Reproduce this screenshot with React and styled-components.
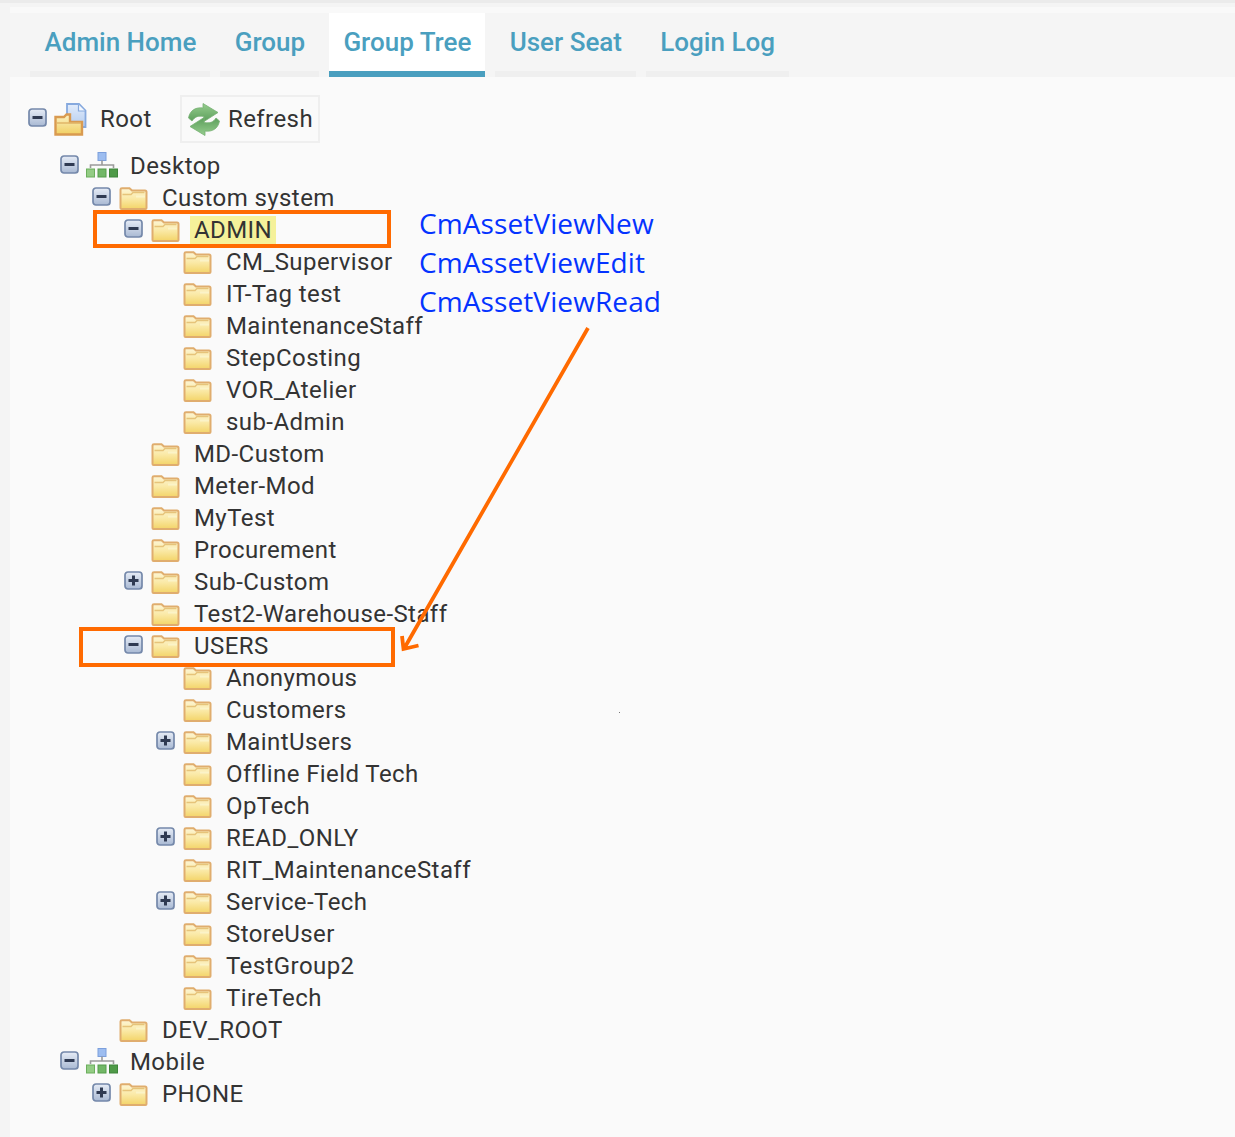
import React, { useId } from "react";
import styled, { createGlobalStyle } from "styled-components";

const Global = createGlobalStyle`
  html, body { margin: 0; padding: 0; background: #f4f4f4; }
  * { box-sizing: border-box; }
`;

const Page = styled.div`
  position: relative;
  width: 1235px;
  height: 1137px;
  overflow: hidden;
  display: flex;
  flex-direction: column;
  background: #f4f4f4;
  font-family: Roboto, "Liberation Sans", sans-serif;
`;
const TopStrip = styled.div`
  height: 3px;
  background: #ebebeb;
  flex: none;
`;
const Main = styled.div`
  flex: 1;
  margin-left: 10px;
  margin-top: 4px;
  display: flex;
  flex-direction: column;
  min-height: 0;
`;
const TabBar = styled.nav`
  display: flex;
  gap: 10px;
  height: 70px;
  padding: 6px 0 0 20px;
  background: linear-gradient(#f9f9f9 0, #f9f9f9 6px, #f5f5f5 6px);
  flex: none;
`;
const Tab = styled.div`
  padding: 0 13.8px 0 14.5px;
  height: 64px;
  line-height: 59px;
  font-size: 26px;
  font-weight: 500;
  color: #4a9fbf;
  background: ${(p) => (p.$active ? "#ffffff" : "transparent")};
  border-bottom: 6px solid ${(p) => (p.$active ? "#4a9fbf" : "#efefef")};
  white-space: nowrap;
`;
const Panel = styled.div`
  flex: 1;
  background: #fafafa;
  padding: 18px 0 0 18px;
  color: #333;
  font-size: 24px;
`;
const RootRow = styled.div`
  display: flex;
  align-items: center;
  height: 48px;
  margin-bottom: 7px;
`;
const RootLabel = styled.span`
  margin-left: 13px;
  width: 80px;
  letter-spacing: 0.42px;
  line-height: 1;
`;
const RefreshButton = styled.div`
  display: flex;
  align-items: center;
  gap: 7px;
  width: 140px;
  height: 48px;
  padding-left: 6px;
  border: 2px solid #efefef;
  background: #fafafa;
  letter-spacing: 0.42px;
  color: #333;
`;
const Row = styled.div`
  display: flex;
  align-items: center;
  height: 32px;
  padding-left: ${(p) => p.$level * 32}px;
  white-space: nowrap;
  letter-spacing: 0.42px;
`;
const ToggleSlot = styled.span`
  display: flex;
  width: ${(p) => (p.$wide ? 27 : 26)}px;
  flex: none;
  margin-top: -3px;
`;
const NetWrap = styled.span`
  display: flex;
  flex: none;
  margin-top: -3px;
`;
const Label = styled.span`
  margin-left: ${(p) => (p.$net ? 12 : 14)}px;
  line-height: 28px;
  background: ${(p) => (p.$mark ? "#f5f19a" : "transparent")};
  padding: 0 ${(p) => (p.$mark ? 4 : 0)}px;
  position: relative;
  left: ${(p) => (p.$mark ? -4 : 0)}px;
`;
const Callout = styled.div`
  position: absolute;
  left: ${(p) => p.$x}px;
  top: ${(p) => p.$y}px;
  width: ${(p) => p.$w}px;
  height: ${(p) => p.$h}px;
  border: 4px solid #ff6a00;
`;
const Notes = styled.div`
  position: absolute;
  left: 419px;
  top: 204px;
  display: flex;
  flex-direction: column;
  font-family: "Open Sans", "Noto Sans", sans-serif;
  font-size: 28px;
  line-height: 39px;
  letter-spacing: 0.1px;
  color: #0433ff;
`;
const ArrowLayer = styled.svg`
  position: absolute;
  left: 0;
  top: 0;
  pointer-events: none;
`;
const IconSvg = styled.svg`
  display: block;
  flex: none;
  filter: blur(0.45px);
`;

const Toggle = ({ open }) => {
  const id = useId();
  return (
    <IconSvg width="19" height="19" viewBox="0 0 19 19">
      <defs>
        <linearGradient id={id} x1="0" y1="0" x2="0" y2="1">
          <stop offset="0" stopColor="#e6ecf6" />
          <stop offset="1" stopColor="#a9b9d3" />
        </linearGradient>
      </defs>
      <rect x="1" y="1" width="17" height="17" rx="3" fill={`url(#${id})`} stroke="#7488aa" strokeWidth="1.7" />
      <rect x="4.5" y="8" width="10" height="3" fill="#2f3a52" />
      {!open && <rect x="8" y="4.5" width="3" height="10" fill="#2f3a52" />}
    </IconSvg>
  );
};

const Folder = () => {
  const id = useId();
  return (
    <IconSvg width="29" height="23" viewBox="0 0 29 23">
      <defs>
        <linearGradient id={id} x1="0" y1="0" x2="0" y2="1">
          <stop offset="0" stopColor="#fdf6d6" />
          <stop offset="0.5" stopColor="#fae9a6" />
          <stop offset="1" stopColor="#f3d468" />
        </linearGradient>
      </defs>
      <path
        d="M1.500 21V2.500Q1.500 1.200 3 1.200H10.500L13 3.500H26q1.500 0 1.500 1.500V21q0 1-1 1H2.500q-1 0-1-1Z"
        fill={`url(#${id})`}
        stroke="#e0ad6e"
        strokeWidth="2"
      />
      <path d="M3.500 7.500h8.500l2-2H25.500" fill="none" stroke="#e6c47a" strokeWidth="1.400" />
      <rect x="17" y="8.500" width="9" height="2" fill="#fbf3c8" />
    </IconSvg>
  );
};

const RootIcon = () => {
  const a = useId();
  const b = useId();
  return (
    <IconSvg width="33" height="33" viewBox="0 0 33 33">
      <defs>
        <linearGradient id={a} x1="0" y1="0" x2="0" y2="1">
          <stop offset="0" stopColor="#e2ecfb" />
          <stop offset="1" stopColor="#b4ccef" />
        </linearGradient>
        <linearGradient id={b} x1="0" y1="0" x2="0" y2="1">
          <stop offset="0" stopColor="#fbf2c4" />
          <stop offset="1" stopColor="#f1cf62" />
        </linearGradient>
      </defs>
      <path d="M13 1h12l6.500 6.500V24H13Z" fill={`url(#${a})`} stroke="#86a9de" strokeWidth="1.800" />
      <path d="M24.500 1.500v6.500h6.500" fill="#f4f8fe" stroke="#86a9de" strokeWidth="1.200" />
      <path d="M1.500 31.500V14h8.500l2.500-2.500h3.500V19h12v12.500Z" fill={`url(#${b})`} stroke="#d99a50" strokeWidth="2.400" />
      <path d="M3 20h24" stroke="#e0b668" strokeWidth="1.500" />
    </IconSvg>
  );
};

const NetIcon = () => (
  <IconSvg width="32" height="26" viewBox="0 0 32 26">
    <rect x="12" y="0.500" width="8" height="8" fill="#9dbdf0" stroke="#7c9fdc" />
    <path d="M16 8.500v4M4.500 16v-3h23v3" fill="none" stroke="#9b9b9b" strokeWidth="1.600" />
    <rect x="0.500" y="17" width="8" height="8" fill="#93cc84" stroke="#6bae5c" />
    <rect x="12" y="17" width="8" height="8" fill="#72b767" stroke="#559c4b" />
    <rect x="23.500" y="17" width="8" height="8" fill="#4f9a48" stroke="#3e853a" />
  </IconSvg>
);

const RefreshIcon = () => {
  const id = useId();
  const arrow = "M0.500 15C2 7 8 4 15 5V0.500L30 9.500 16 18.500V13.500C10 12.500 7 13.500 4 18Z";
  return (
    <IconSvg width="33" height="33" viewBox="0 0 33 33">
      <defs>
        <linearGradient id={id} x1="0" y1="0" x2="0" y2="1">
          <stop offset="0" stopColor="#96cd8e" />
          <stop offset="1" stopColor="#5c9f5b" />
        </linearGradient>
      </defs>
      <path d={arrow} fill={`url(#${id})`} stroke="#76b072" strokeWidth="0.800" />
      <path d={arrow} fill={`url(#${id})`} stroke="#76b072" strokeWidth="0.800" transform="rotate(180 16 16.500)" />
    </IconSvg>
  );
};

const tree = [
  { l: 1, t: "Desktop", open: true, net: true },
  { l: 2, t: "Custom system", open: true },
  { l: 3, t: "ADMIN", open: true, mark: true },
  { l: 4, t: "CM_Supervisor" },
  { l: 4, t: "IT-Tag test" },
  { l: 4, t: "MaintenanceStaff" },
  { l: 4, t: "StepCosting" },
  { l: 4, t: "VOR_Atelier" },
  { l: 4, t: "sub-Admin" },
  { l: 3, t: "MD-Custom" },
  { l: 3, t: "Meter-Mod" },
  { l: 3, t: "MyTest" },
  { l: 3, t: "Procurement" },
  { l: 3, t: "Sub-Custom", open: false },
  { l: 3, t: "Test2-Warehouse-Staff" },
  { l: 3, t: "USERS", open: true },
  { l: 4, t: "Anonymous" },
  { l: 4, t: "Customers" },
  { l: 4, t: "MaintUsers", open: false },
  { l: 4, t: "Offline Field Tech" },
  { l: 4, t: "OpTech" },
  { l: 4, t: "READ_ONLY", open: false },
  { l: 4, t: "RIT_MaintenanceStaff" },
  { l: 4, t: "Service-Tech", open: false },
  { l: 4, t: "StoreUser" },
  { l: 4, t: "TestGroup2" },
  { l: 4, t: "TireTech" },
  { l: 2, t: "DEV_ROOT" },
  { l: 1, t: "Mobile", open: true, net: true },
  { l: 2, t: "PHONE", open: false },
];

const tabs = ["Admin Home", "Group", "Group Tree", "User Seat", "Login Log"];

export default function App() {
  return (
    <Page>
      <Global />
      <TopStrip />
      <Main>
        <TabBar>
          {tabs.map((t) => (
            <Tab key={t} $active={t === "Group Tree"}>
              {t}
            </Tab>
          ))}
        </TabBar>
        <Panel>
          <RootRow>
            <ToggleSlot>
              <Toggle open />
            </ToggleSlot>
            <RootIcon />
            <RootLabel>Root</RootLabel>
            <RefreshButton>
              <RefreshIcon />
              Refresh
            </RefreshButton>
          </RootRow>
          {tree.map((n) => (
            <Row key={n.t} $level={n.l}>
              <ToggleSlot $wide={!n.net}>{n.open !== undefined && <Toggle open={n.open} />}</ToggleSlot>
              {n.net ? (
                <NetWrap>
                  <NetIcon />
                </NetWrap>
              ) : (
                <Folder />
              )}
              <Label $mark={n.mark} $net={n.net}>
                {n.t}
              </Label>
            </Row>
          ))}
        </Panel>
      </Main>
      <Callout $x={93} $y={210} $w={298} $h={38} />
      <Callout $x={79} $y={627} $w={316} $h={40} />
      <Notes>
        <span>CmAssetViewNew</span>
        <span>CmAssetViewEdit</span>
        <span>CmAssetViewRead</span>
      </Notes>
      <ArrowLayer width="1235" height="1137" viewBox="0 0 1235 1137">
        <path d="M588 328 405 647M402 636l1.500 13 15-3.500" fill="none" stroke="#ff6a00" strokeWidth="3.800" />
        <rect x="619" y="712" width="1" height="1" fill="#777" />
      </ArrowLayer>
    </Page>
  );
}
